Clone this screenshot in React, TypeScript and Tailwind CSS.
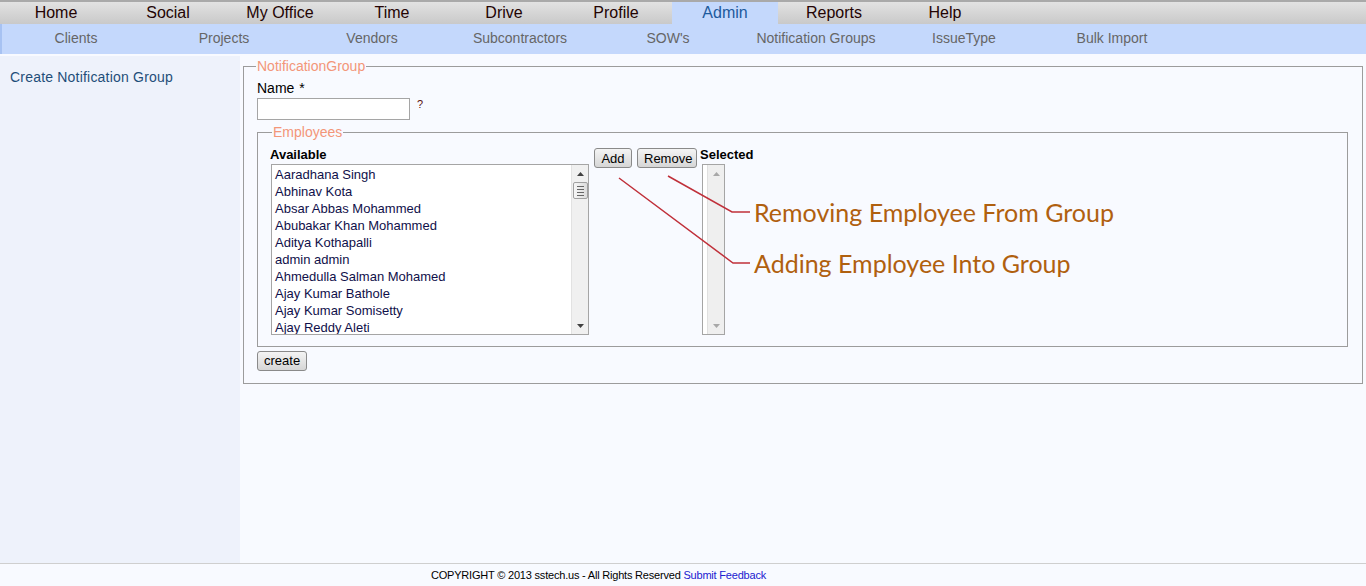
import React from "react"

const topNav = [
  { label: "Home", w: "w-[112px]" },
  { label: "Social", w: "w-[112px]" },
  { label: "My Office", w: "w-[112px]" },
  { label: "Time", w: "w-[112px]" },
  { label: "Drive", w: "w-[112px]" },
  { label: "Profile", w: "w-[112px]" },
  { label: "Admin", w: "w-[106px]", active: true },
  { label: "Reports", w: "w-[112px]" },
  { label: "Help", w: "w-[110px]" },
]

const subNav = ["Clients", "Projects", "Vendors", "Subcontractors", "SOW's", "Notification Groups", "IssueType", "Bulk Import"]

const employees = [
  "Aaradhana Singh",
  "Abhinav Kota",
  "Absar Abbas Mohammed",
  "Abubakar Khan Mohammed",
  "Aditya Kothapalli",
  "admin admin",
  "Ahmedulla Salman Mohamed",
  "Ajay Kumar Bathole",
  "Ajay Kumar Somisetty",
  "Ajay Reddy Aleti",
]

const Arrow = ({ up, dim }: { up?: boolean; dim?: boolean }) => (
  <svg width="7" height="4" viewBox="0 0 7 4" className="block">
    <path d={up ? "M0 4 L3.5 0 L7 4 Z" : "M0 0 L3.5 4 L7 0 Z"} fill={dim ? "#a8a8a8" : "#404040"} />
  </svg>
)

const Btn = ({ children, className = "" }: { children: React.ReactNode; className?: string }) => (
  <button
    className={`h-[20px] px-[6px] text-[13px] leading-none text-black border border-[#8a8a8a] rounded-[3px] bg-gradient-to-b from-[#f4f4f4] to-[#d6d6d6] ${className}`}
  >
    {children}
  </button>
)

const App = () => {
  return (
    <div className="w-[1366px] h-[586px] flex flex-col bg-[#f8faff] font-['Liberation_Sans',Arial,sans-serif] overflow-hidden">
      {/* top menu */}
      <div className="h-[24px] flex border-t-2 border-[#a9a9a9] bg-gradient-to-b from-[#e2e2e2] to-[#c9c9c9]">
        {topNav.map((n) => (
          <div
            key={n.label}
            className={`${n.w} h-full text-center text-[16px] leading-[22px] ${n.active ? "bg-[#c4d8fc] text-[#1d5a9c]" : "text-[#230303]"}`}
          >
            {n.label}
          </div>
        ))}
      </div>
      {/* sub menu */}
      <div className="h-[30px] flex bg-[#c4d8fc] border-l-2 border-[#a7c2f2]">
        {subNav.map((s) => (
          <div key={s} className="w-[148px] text-center text-[14px] leading-[29px] text-[#666666]">
            {s}
          </div>
        ))}
      </div>
      <div className="flex flex-1 pt-[2px]">
        <aside className="w-[240px] bg-[#eef2fb] pt-[11px] pl-[10px]">
          <div className="text-[14px] text-[#1f4e79] tracking-[0.2px]">Create Notification Group</div>
        </aside>
        <main className="relative flex-1 pl-[3px] pr-[3px] pt-[3px]">
          <fieldset className="border border-[#9c9c9c] pl-[13px] pr-[14px] pb-[11px] pt-0">
            <legend className="text-[14px] leading-[14px] text-[#f39679] px-[1px] ml-[-1px]">NotificationGroup</legend>
            <div className="text-[14px] leading-[17px] text-black pt-[7px]">
              Name <span className="ml-[1px]">*</span>
            </div>
            <div className="flex items-start gap-[7px] mt-[1px]">
              <input className="w-[153px] h-[22px] border border-[#a5a5a5] bg-white" />
              <span className="text-[11px] leading-[11px] text-[#5a1010] mt-[1px]">?</span>
            </div>
            <fieldset className="mt-[5px] border border-[#9c9c9c] pl-[12px] pr-[12px] pb-[11px] pt-0">
              <legend className="text-[14px] leading-[14px] text-[#f39679] px-[1px] ml-[2px]">Employees</legend>
              <div className="flex items-start pt-[9px]">
                <div className="w-[319px]">
                  <div className="text-[13px] leading-[13px] font-bold text-black">Available</div>
                  <div className="mt-[3px] ml-[1px] w-[318px] h-[171px] flex border border-[#a5a5a5] bg-white">
                    <div className="flex-1 pl-[3px] pt-[1px] overflow-hidden">
                      {employees.map((e) => (
                        <div key={e} className="text-[13px] leading-[17px] text-[#10104a] whitespace-nowrap">
                          {e}
                        </div>
                      ))}
                    </div>
                    <div className="w-[17px] bg-[#f0f0f0] border-l border-[#e2e2e2] flex flex-col items-center">
                      <div className="h-[17px] flex items-center justify-center">
                        <Arrow up />
                      </div>
                      <div className="w-[15px] h-[17px] rounded-[2px] border border-[#a0a0a0] bg-gradient-to-r from-[#f6f6f6] to-[#dcdcdc] flex flex-col items-center justify-center gap-[2px]">
                        <div className="w-[7px] h-[1px] bg-[#666]" />
                        <div className="w-[7px] h-[1px] bg-[#666]" />
                        <div className="w-[7px] h-[1px] bg-[#666]" />
                        <div className="w-[7px] h-[1px] bg-[#666]" />
                      </div>
                      <div className="flex-1" />
                      <div className="h-[17px] flex items-center justify-center">
                        <Arrow />
                      </div>
                    </div>
                  </div>
                </div>
                <div className="flex gap-[5px] ml-[5px] mt-0">
                  <Btn className="w-[38px]">Add</Btn>
                  <Btn className="w-[60px]">Remove</Btn>
                </div>
                <div className="ml-[3px]">
                  <div className="text-[13px] leading-[13px] font-bold text-black">Selected</div>
                  <div className="mt-[3px] ml-[2px] w-[23px] h-[171px] border border-[#a5a5a5] bg-white flex">
                    <div className="w-[4px]" />
                    <div className="flex-1 bg-[#efefef] border-l border-[#e0e0e0] flex flex-col items-center justify-between">
                      <div className="h-[17px] flex items-center">
                        <Arrow up dim />
                      </div>
                      <div className="h-[17px] flex items-center">
                        <Arrow dim />
                      </div>
                    </div>
                  </div>
                </div>
              </div>
            </fieldset>
            <div className="mt-[1px]">
              <Btn className="w-[50px]">create</Btn>
            </div>
          </fieldset>

          {/* callouts */}
          <svg className="absolute left-0 top-0 pointer-events-none" width="1126" height="507">
            <polyline points="379,122 493,207 510,207" fill="none" stroke="#c0303a" strokeWidth="1.5" />
            <polyline points="428,120 492,156 510,156" fill="none" stroke="#c0303a" strokeWidth="1.5" />
          </svg>
          <div className="absolute left-[514px] top-[141px] text-[25px] leading-[30px] text-[#b0600f] font-['Lato','Open_Sans',sans-serif] whitespace-nowrap">
            Removing Employee From Group
          </div>
          <div className="absolute left-[514px] top-[192px] text-[25px] leading-[30px] text-[#b0600f] font-['Lato','Open_Sans',sans-serif] whitespace-nowrap">
            Adding Employee Into Group
          </div>
        </main>
      </div>
      <footer className="h-[23px] border-t border-[#cfcfcf] bg-[#f8faff] pl-[431px] text-[11px] leading-[22px] tracking-[-0.2px] text-black">
        COPYRIGHT © 2013 sstech.us - All Rights Reserved <span className="text-[#2020d0]">Submit Feedback</span>
      </footer>
    </div>
  )
}

export default App
